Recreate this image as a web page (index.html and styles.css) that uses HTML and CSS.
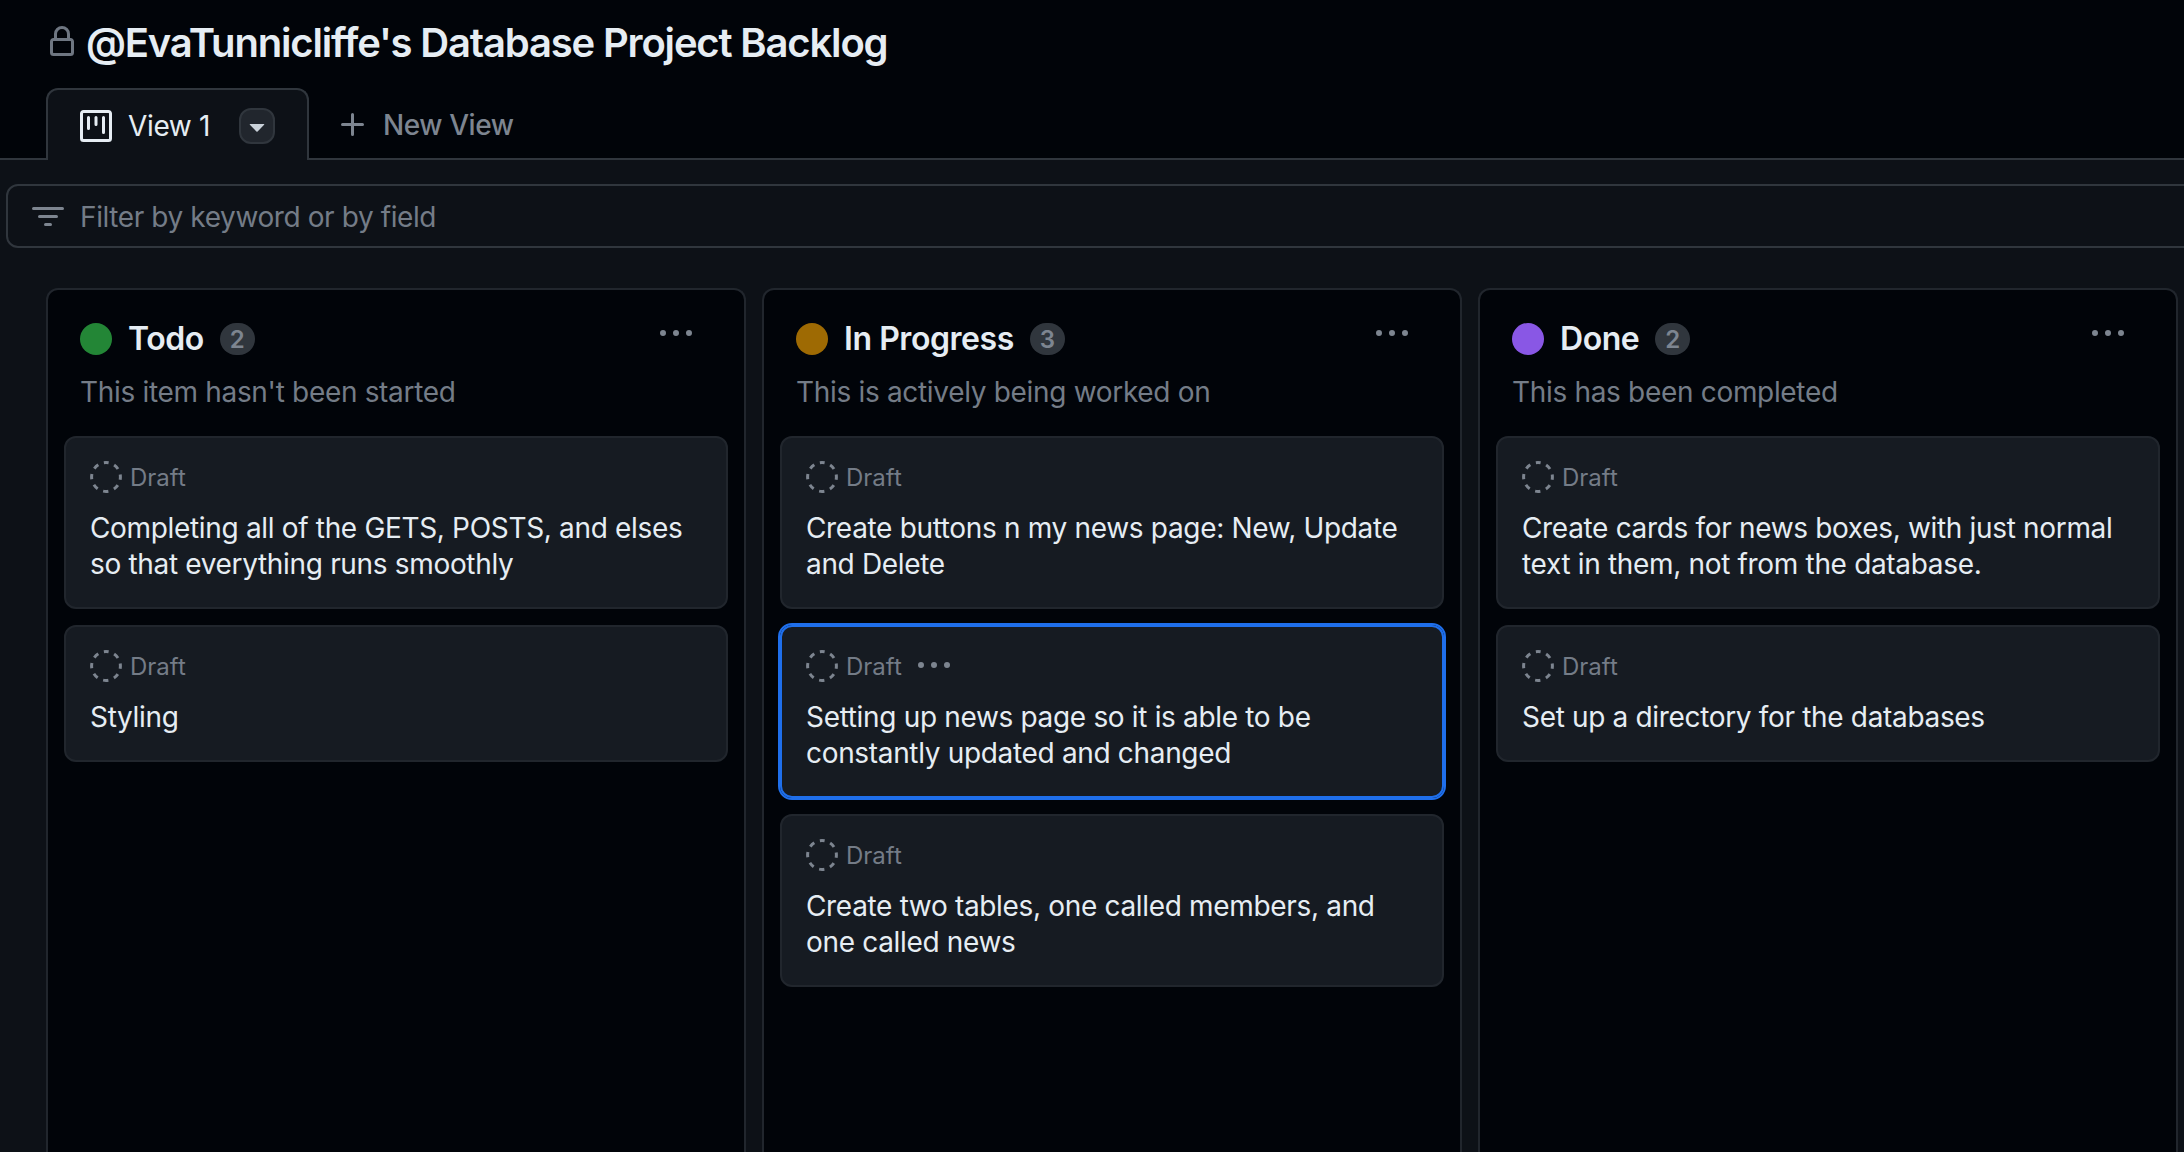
FILE: index.html
```html
<!DOCTYPE html>
<html lang="en">
<head>
  <meta charset="UTF-8" />
  <title>@EvaTunnicliffe's Database Project Backlog</title>
  <link rel="stylesheet" href="styles.css">
</head>
<body>
  <svg class="defs" width="0" height="0">
    <symbol id="draft" viewBox="0 0 16 16">
      <circle cx="8" cy="8" r="7.2" fill="none" stroke="currentColor" stroke-width="1.5" stroke-dasharray="2.7 2.95" stroke-dashoffset="1.35" transform="rotate(-90 8 8)"/>
    </symbol>
    <symbol id="dots" viewBox="0 0 16 16">
      <path fill="currentColor" d="M8 9a1.5 1.5 0 1 0 0-3 1.5 1.5 0 0 0 0 3ZM1.5 9a1.5 1.5 0 1 0 0-3 1.5 1.5 0 0 0 0 3Zm13 0a1.5 1.5 0 1 0 0-3 1.5 1.5 0 0 0 0 3Z"/>
    </symbol>
  </svg>

  <header class="page-head">
    <div class="title-row">
      <svg class="lock" viewBox="0 0 16 16"><path fill="currentColor" d="M4 4a4 4 0 0 1 8 0v2h.25c.966 0 1.75.784 1.75 1.75v5.5A1.75 1.75 0 0 1 12.25 15h-8.5A1.75 1.75 0 0 1 2 13.25v-5.5C2 6.784 2.784 6 3.75 6H4Zm6.5 2V4a2.5 2.5 0 1 0-5 0v2ZM3.75 7.5a.25.25 0 0 0-.25.25v5.5c0 .138.112.25.25.25h8.5a.25.25 0 0 0 .25-.25v-5.5a.25.25 0 0 0-.25-.25Z"/></svg>
      <h1>@EvaTunnicliffe's Database Project Backlog</h1>
    </div>
    <nav class="tabs">
      <div class="tab active">
        <svg class="tab-icon" viewBox="0 0 16 16"><path fill="currentColor" d="M1.75 0h12.5C15.216 0 16 .784 16 1.75v12.5A1.75 1.75 0 0 1 14.25 16H1.75A1.75 1.75 0 0 1 0 14.25V1.75C0 .784.784 0 1.75 0ZM1.5 1.75v12.5c0 .138.112.25.25.25h12.5a.25.25 0 0 0 .25-.25V1.75a.25.25 0 0 0-.25-.25H1.75a.25.25 0 0 0-.25.25ZM11.75 3a.75.75 0 0 1 .75.75v7.5a.75.75 0 0 1-1.5 0v-7.5a.75.75 0 0 1 .75-.75Zm-8.25.75a.75.75 0 0 1 1.5 0v5.5a.75.75 0 0 1-1.5 0ZM8 3a.75.75 0 0 1 .75.75v3.5a.75.75 0 0 1-1.5 0v-3.5A.75.75 0 0 1 8 3Z"/></svg>
        <span>View 1</span>
        <span class="tab-menu"><svg viewBox="0 0 16 16"><path fill="currentColor" d="m4.427 7.427 3.396 3.396a.25.25 0 0 0 .354 0l3.396-3.396A.25.25 0 0 0 11.396 7H4.604a.25.25 0 0 0-.177.427Z"/></svg></span>
      </div>
      <div class="tab new">
        <svg class="plus" viewBox="0 0 16 16"><path fill="currentColor" d="M7.75 2a.75.75 0 0 1 .75.75V7h4.25a.75.75 0 0 1 0 1.5H8.5v4.25a.75.75 0 0 1-1.5 0V8.5H2.75a.75.75 0 0 1 0-1.5H7V2.75A.75.75 0 0 1 7.75 2Z"/></svg>
        <span>New View</span>
      </div>
    </nav>
  </header>

  <main class="content">
    <div class="filter">
      <svg class="filter-icon" viewBox="0 0 16 16"><path fill="currentColor" d="M.75 3h14.5a.75.75 0 0 1 0 1.5H.75a.75.75 0 0 1 0-1.5ZM3 7.75A.75.75 0 0 1 3.75 7h8.5a.75.75 0 0 1 0 1.5h-8.5A.75.75 0 0 1 3 7.75Zm3 4a.75.75 0 0 1 .75-.75h2.5a.75.75 0 0 1 0 1.5h-2.5a.75.75 0 0 1-.75-.75Z"/></svg>
      <span>Filter by keyword or by field</span>
    </div>

    <div class="board">
      <section class="column">
        <div class="col-head">
          <span class="dot green"></span>
          <h2>Todo</h2>
          <span class="count">2</span>
          <svg class="col-menu"><use href="#dots"/></svg>
        </div>
        <p class="col-desc">This item hasn't been started</p>
        <div class="cards">
          <article class="card">
            <div class="card-top"><svg class="draft"><use href="#draft"/></svg><span>Draft</span></div>
            <p>Completing all of the GETS, POSTS, and elses so that everything runs smoothly</p>
          </article>
          <article class="card">
            <div class="card-top"><svg class="draft"><use href="#draft"/></svg><span>Draft</span></div>
            <p>Styling</p>
          </article>
        </div>
      </section>

      <section class="column">
        <div class="col-head">
          <span class="dot orange"></span>
          <h2>In Progress</h2>
          <span class="count">3</span>
          <svg class="col-menu"><use href="#dots"/></svg>
        </div>
        <p class="col-desc">This is actively being worked on</p>
        <div class="cards">
          <article class="card">
            <div class="card-top"><svg class="draft"><use href="#draft"/></svg><span>Draft</span></div>
            <p>Create buttons n my news page: New, Update and Delete</p>
          </article>
          <article class="card selected">
            <div class="card-top"><svg class="draft"><use href="#draft"/></svg><span>Draft</span><svg class="card-menu"><use href="#dots"/></svg></div>
            <p>Setting up news page so it is able to be constantly updated and changed</p>
          </article>
          <article class="card">
            <div class="card-top"><svg class="draft"><use href="#draft"/></svg><span>Draft</span></div>
            <p>Create two tables, one called members, and one called news</p>
          </article>
        </div>
      </section>

      <section class="column">
        <div class="col-head">
          <span class="dot purple"></span>
          <h2>Done</h2>
          <span class="count">2</span>
          <svg class="col-menu"><use href="#dots"/></svg>
        </div>
        <p class="col-desc">This has been completed</p>
        <div class="cards">
          <article class="card">
            <div class="card-top"><svg class="draft"><use href="#draft"/></svg><span>Draft</span></div>
            <p>Create cards for news boxes, with just normal text in them, not from the database.</p>
          </article>
          <article class="card">
            <div class="card-top"><svg class="draft"><use href="#draft"/></svg><span>Draft</span></div>
            <p>Set up a directory for the databases</p>
          </article>
        </div>
      </section>
    </div>
  </main>
</body>
</html>
```

FILE: styles.css
```css
* { box-sizing: border-box; }

html, body {
  height: 100%;
}

body {
  margin: 0;
  background: #010409;
  color: #e6edf3;
  font-family: Inter, "Noto Sans", sans-serif;
  overflow: hidden;
  display: flex;
  flex-direction: column;
}

.defs {
  position: absolute;
}

.page-head {
  height: 160px;
  flex: none;
  display: flex;
  flex-direction: column;
  border-bottom: 2px solid #30363d;
}

.title-row {
  height: 88px;
  padding-left: 46px;
  display: flex;
  align-items: flex-start;
  gap: 8px;
}

.lock {
  width: 32px;
  height: 32px;
  margin-top: 26px;
  color: #6e7681;
}

h1 {
  margin: 20px 0 0;
  font-size: 40px;
  line-height: 46px;
  font-weight: 600;
  letter-spacing: -1.17px;
}

.tabs {
  display: flex;
  padding-left: 46px;
  height: 72px;
  margin-bottom: -2px;
}

.tab {
  display: flex;
  align-items: center;
  font-size: 28px;
  letter-spacing: -0.35px;
  padding-top: 2px;
}

.tab.active {
  width: 263px;
  padding-left: 32px;
  background: #0d1117;
  border: 2px solid #30363d;
  border-bottom: none;
  border-radius: 12px 12px 0 0;
  color: #e6edf3;
}

.tab-icon {
  width: 32px;
  height: 32px;
  margin-right: 16px;
}

.tab-menu {
  width: 36px;
  height: 36px;
  margin-left: 29px;
  border-radius: 12px;
  border: 2px solid #30363d;
  background: #21262d;
  color: #c9d1d9;
  display: flex;
  align-items: center;
  justify-content: center;
}

.tab-menu svg {
  width: 32px;
  height: 32px;
  flex: none;
}

.tab.new {
  padding-left: 28px;
  color: #7d8590;
  font-weight: 500;
  letter-spacing: -0.42px;
}

.plus {
  width: 32px;
  height: 32px;
  margin-right: 14px;
}

.content {
  flex: 1;
  min-height: 0;
  background: #0d1117;
  padding: 24px 0 0 6px;
  display: flex;
  flex-direction: column;
}

.filter {
  height: 64px;
  flex: none;
  margin-right: -20px;
  border: 2px solid #30363d;
  border-radius: 12px;
  display: flex;
  align-items: center;
  padding: 2px 0 0 24px;
  color: #747c87;
  font-size: 28px;
  letter-spacing: -0.4px;
}

.filter-icon {
  width: 32px;
  height: 32px;
  margin-right: 16px;
  color: #7d8590;
}

.board {
  flex: 1;
  min-height: 0;
  display: flex;
  gap: 16px;
  padding: 40px 0 0 40px;
}

.column {
  width: 700px;
  flex: none;
  background: #010409;
  border: 2px solid #21262d;
  border-bottom: none;
  border-radius: 12px 12px 0 0;
  padding: 0 16px;
}

.col-head {
  position: relative;
  display: flex;
  align-items: center;
  height: 32px;
  margin-top: 33px;
  padding-left: 16px;
}

.dot {
  width: 32px;
  height: 32px;
  border-radius: 50%;
  margin-right: 16px;
}

.green { background: #238636; }
.orange { background: #9e6a03; }
.purple { background: #8957e5; }

h2 {
  margin: 0;
  font-size: 32px;
  line-height: 40px;
  font-weight: 600;
  letter-spacing: -0.45px;
}

.count {
  width: 35px;
  height: 32px;
  margin-left: 16px;
  border-radius: 16px;
  background: #30363d;
  color: #7d8590;
  font-size: 24px;
  font-weight: 600;
  display: flex;
  align-items: center;
  justify-content: center;
}

.col-menu {
  position: absolute;
  top: -5px;
  right: 36px;
  width: 32px;
  height: 32px;
  color: #7d8590;
}

.col-desc {
  margin: 19px 0 0 16px;
  font-size: 28px;
  line-height: 36px;
  color: #747c87;
  letter-spacing: -0.32px;
}

.cards {
  margin-top: 26px;
  display: flex;
  flex-direction: column;
  gap: 16px;
}

.card {
  background: #161b22;
  border: 2px solid #21262d;
  border-radius: 12px;
  padding: 23px 24px 25px;
}

.card.selected {
  outline: 2px solid #1f6feb;
  outline-offset: 0;
  border-color: #1f6feb;
}

.card-top {
  display: flex;
  align-items: center;
  height: 32px;
  font-size: 24px;
  color: #747c87;
}

.draft {
  width: 32px;
  height: 32px;
  margin-right: 8px;
  color: #7d8590;
}

.card-menu {
  width: 32px;
  height: 32px;
  margin-left: 16px;
  color: #7d8590;
}

.card p {
  margin: 17px 0 0;
  font-size: 28px;
  line-height: 36px;
  color: #e6edf3;
  letter-spacing: -0.33px;
}
```
